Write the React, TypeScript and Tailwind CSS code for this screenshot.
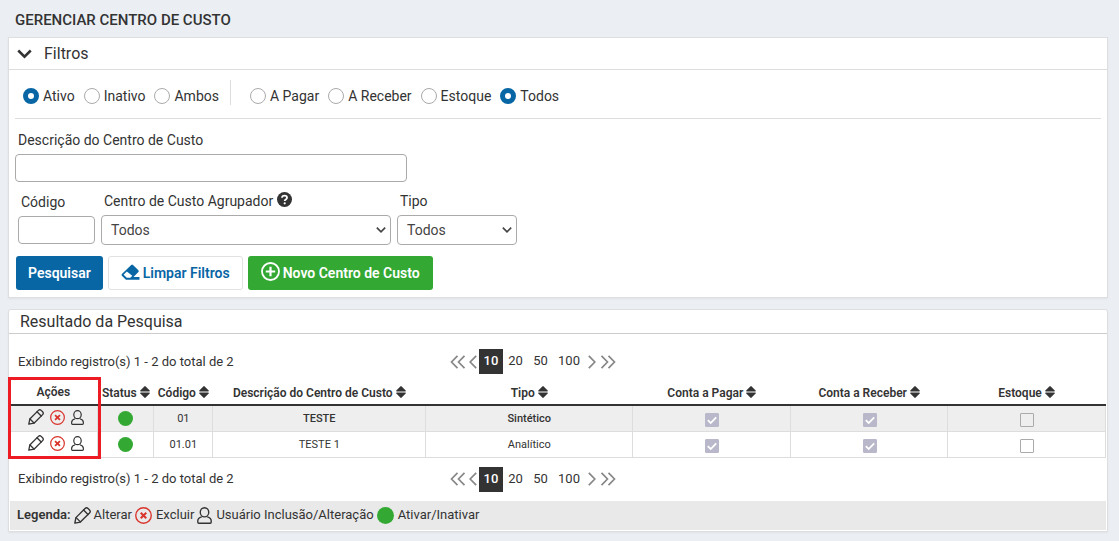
import React from 'react';

const PencilIcon = ({ className }: { className: string }) => (
  <svg viewBox="0 0 16 16" className={className} fill="none" stroke="#333" strokeWidth="1.300" strokeLinejoin="round" strokeLinecap="round" aria-hidden="true">
    <path d="M.8 15.200l1-5.200L10.400 1.400a2 2 0 0 1 2.800 0l1.400 1.400a2 2 0 0 1 0 2.800L6 14.200z" />
    <path d="M9 2.800L13.200 7M2 10l4 4" />
  </svg>
);

const ExcludeIcon = ({ className }: { className: string }) => (
  <svg viewBox="0 0 16 16" className={className} fill="none" stroke="#d9352c" aria-hidden="true">
    <circle cx="8" cy="8" r="7.300" strokeWidth="1.300" />
    <path d="M5.400 5.400l5.200 5.200M10.600 5.400l-5.200 5.200" strokeWidth="1.900" />
  </svg>
);

const UserIcon = ({ className }: { className: string }) => (
  <svg viewBox="0 0 14 16" className={className} fill="none" stroke="#333" strokeWidth="1.300" strokeLinejoin="round" aria-hidden="true">
    <ellipse cx="7" cy="5" rx="4" ry="4.300" />
    <path d="M4.400 9.300C2 10 .7 11.200.7 13v1.400q0 .9.9.9h10.800q.9 0 .9-.9V13c0-1.800-1.300-3-3.700-3.700" />
  </svg>
);

const SortIcon = () => (
  <svg viewBox="0 0 10 12" className="mb-0.5 h-3 w-2.5 shrink-0" fill="#333" aria-hidden="true">
    <path d="M4.600.3a.6.6 0 0 1 .8 0l4.300 4.100c.4.4.1 1-.5 1H.8c-.6 0-.9-.6-.5-1zM4.600 11.700a.6.6 0 0 0 .8 0l4.300-4.100c.4-.4.1-1-.5-1H.8c-.6 0-.9.6-.5 1z" />
  </svg>
);

const Dot = ({ className }: { className: string }) => (
  <svg viewBox="0 0 16 16" className={className} aria-hidden="true">
    <circle cx="8" cy="8" r="8" fill="#33a933" />
  </svg>
);

const ChevronDown = ({ className }: { className: string }) => (
  <svg viewBox="0 0 12 8" className={className} fill="none" stroke="currentColor" strokeWidth="2" aria-hidden="true">
    <path d="M1 1.200l5 5 5-5" />
  </svg>
);

const Arrow = ({ double, flip }: { double?: boolean; flip?: boolean }) => (
  <svg
    viewBox={double ? '0 0 16 14' : '0 0 8 14'}
    className={`${double ? 'w-4' : 'w-2'} h-3.5 ${flip ? 'rotate-180' : ''}`}
    fill="none"
    stroke="#888"
    strokeWidth="1.700"
    aria-hidden="true"
  >
    <path d={double ? 'M7.500.8L1.500 7l6 6.200M14.500.8L8.500 7l6 6.200' : 'M7.200.8L1.200 7l6 6.200'} />
  </svg>
);

const Radio = ({ name, label, checked }: { name: string; label: string; checked?: boolean }) => (
  <label className="flex items-center gap-1">
    <input
      type="radio"
      name={name}
      defaultChecked={checked}
      className="size-4 appearance-none rounded-full border border-[#aaa] bg-white checked:border-[5px] checked:border-[#0866a5]"
    />
    {label}
  </label>
);

const fieldClass = 'rounded border border-[#aaa] bg-white text-sm text-[#444]';

const Select = ({ id }: { id: string }) => (
  <div className="grid items-center">
    <select id={id} className={`${fieldClass} col-start-1 row-start-1 h-[30px] w-full appearance-none pr-6 pl-[9px]`}>
      <option>Todos</option>
    </select>
    <ChevronDown className="pointer-events-none col-start-1 row-start-1 mr-[5px] h-2 w-2.5 justify-self-end text-[#444]" />
  </div>
);

const Pager = () => (
  <div className="grid h-[25px] grid-cols-[432px_1fr] items-center text-[13px]">
    <p className="pt-px">Exibindo registro(s) 1 - 2 do total de 2</p>
    <nav aria-label="Paginação" className="flex items-center">
      <button type="button" aria-label="Primeira página"><Arrow double /></button>
      <button type="button" aria-label="Página anterior" className="ml-[3px]"><Arrow /></button>
      <button type="button" className="ml-0.5 h-[25px] w-6 bg-[#333] font-medium text-white">10</button>
      <button type="button" className="w-[25px]">20</button>
      <button type="button" className="w-[25px]">50</button>
      <button type="button" className="w-8">100</button>
      <button type="button" aria-label="Próxima página" className="ml-[3px]"><Arrow flip /></button>
      <button type="button" aria-label="Última página" className="ml-1"><Arrow double flip /></button>
    </nav>
  </div>
);

const Check = ({ label, checked }: { label: string; checked: boolean }) => (
  <div className="grid justify-center pt-1 pl-px">
    <input
      type="checkbox"
      aria-label={label}
      disabled
      defaultChecked={checked}
      className="peer col-start-1 row-start-1 size-3.5 appearance-none rounded-[1px] border border-[#aaa] checked:border-[#b9b8ca] checked:bg-[#b9b8ca]"
    />
    <svg viewBox="0 0 14 14" className="pointer-events-none invisible col-start-1 row-start-1 size-3.5 peer-checked:visible" fill="none" stroke="#fff" strokeWidth="1.800" aria-hidden="true">
      <path d="M2.800 7.200l2.900 2.800 5.500-5.700" />
    </svg>
  </div>
);

const columns = [
  { title: 'Ações', width: 'w-[8.1%]', sortable: false },
  { title: 'Status', width: 'w-[5.1%]', sortable: true },
  { title: 'Código', width: 'w-[5.4%]', sortable: true },
  { title: 'Descrição do Centro de Custo', width: 'w-[19.4%]', sortable: true },
  { title: 'Tipo', width: 'w-[18.9%]', sortable: true },
  { title: 'Conta a Pagar', width: 'w-[14.4%]', sortable: true },
  { title: 'Conta a Receber', width: 'w-[14.3%]', sortable: true },
  { title: 'Estoque', width: 'w-[14.4%]', sortable: true },
];

const rows = [
  { code: '01', description: 'TESTE', type: 'Sintético', group: true },
  { code: '01.01', description: 'TESTE 1', type: 'Analítico', group: false },
];

export default function App() {
  return (
    <main className="min-h-screen bg-[#ebeff4] pr-[11px] pb-2 pl-2 font-['Roboto',sans-serif] text-sm text-[#333]">
      <h1 className="px-[7px] pt-2.5 pb-[7px] text-[15px] leading-5 font-medium">GERENCIAR CENTRO DE CUSTO</h1>

      <section className="border border-[#dcdee0] bg-white pb-[7px] shadow-xs">
        <h2 className="flex h-8 items-center border-b border-[#ddd] px-2 text-base">
          <button type="button" className="flex items-center gap-3">
            <ChevronDown className="h-2.5 w-[15px]" />
            Filtros
          </button>
        </h2>

        <form className="px-1.5" onSubmit={(e) => e.preventDefault()}>
          <div className="flex h-[49px] items-center gap-2 border-b border-[#ddd] pl-2">
            <div className="flex gap-[9px] pt-1" role="radiogroup" aria-label="Situação">
              <Radio name="situacao" label="Ativo" checked />
              <Radio name="situacao" label="Inativo" />
              <Radio name="situacao" label="Ambos" />
            </div>
            <div className="mr-1 ml-[3px] mb-1 h-[25px] border-l border-[#ddd]" />
            <div className="flex gap-[9px] pt-1 pl-[7px]" role="radiogroup" aria-label="Conta">
              <Radio name="conta" label="A Pagar" />
              <Radio name="conta" label="A Receber" />
              <Radio name="conta" label="Estoque" />
              <Radio name="conta" label="Todos" checked />
            </div>
          </div>

          <div className="flex max-w-[392px] flex-col gap-1 pt-[11px]">
            <label htmlFor="descricao" className="pl-[3px] leading-5">Descrição do Centro de Custo</label>
            <input id="descricao" type="text" className={`${fieldClass} h-7 px-2`} />
          </div>

          <div className="flex items-start gap-1.5 pt-[9px] pl-[3px]">
            <div className="flex w-[77px] flex-col gap-1 pt-px">
              <label htmlFor="codigo" className="pl-[3px] leading-5">Código</label>
              <input id="codigo" type="text" className={`${fieldClass} h-7 w-full px-2`} />
            </div>
            <div className="flex w-[290px] flex-col gap-1">
              <label htmlFor="agrupador" className="flex items-center gap-1 pl-[3px] leading-5">
                Centro de Custo Agrupador
                <svg viewBox="0 0 16 16" className="mb-1 size-[15px]" aria-hidden="true">
                  <circle cx="8" cy="8" r="8" fill="#333" />
                  <path d="M5.300 6.200C5.400 4.700 6.500 3.800 8 3.800s2.700.9 2.700 2.200c0 1.900-2.500 1.900-2.500 3.500" fill="none" stroke="#fff" strokeWidth="1.900" />
                  <circle cx="8.200" cy="12" r="1.200" fill="#fff" />
                </svg>
              </label>
              <Select id="agrupador" />
            </div>
            <div className="flex w-[120px] flex-col gap-1">
              <label htmlFor="tipo" className="pl-[3px] leading-5">Tipo</label>
              <Select id="tipo" />
            </div>
          </div>

          <div className="flex gap-[5px] pt-[11px] pl-px">
            <button type="submit" className="h-[34px] rounded-[3px] bg-[#0866a5] px-3 font-semibold text-white">Pesquisar</button>
            <button type="button" className="flex h-[34px] items-center gap-[3px] rounded-[3px] border border-[#e2e2e2] bg-white px-3 font-semibold text-[#0866a5]">
              <svg viewBox="0 0 19 17" className="mb-0.5 h-[17px] w-[19px]" aria-hidden="true">
                <path d="M10.200.9q.9-.8 1.800 0l5.400 5.400q.8.9 0 1.800L12.500 13H18.500v2.800H5.800q-.8 0-1.400-.6L.9 11.700q-.8-.9 0-1.800z" fill="#0866a5" />
                <path d="M5.800 7.500L2.600 10.800l3.200 3h3.500l2-2z" fill="#fff" />
              </svg>
              Limpar Filtros
            </button>
            <button type="button" className="flex h-[34px] items-center gap-[3px] rounded-[3px] bg-[#33a933] px-[13px] font-semibold text-white">
              <svg viewBox="0 0 19 19" className="mb-[3px] size-[19px]" fill="none" stroke="#fff" aria-hidden="true">
                <circle cx="9.500" cy="9.500" r="8.500" strokeWidth="1.800" />
                <path d="M9.500 4.800v9.400M4.800 9.500h9.400" strokeWidth="2.200" />
              </svg>
              Novo Centro de Custo
            </button>
          </div>
        </form>
      </section>

      <section className="mt-[11px] rounded-t-[3px] border border-[#dcdee0] bg-white px-px pb-px shadow-xs">
        <h2 className="-mx-px h-6 border-b border-[#ccc] px-[11px] text-base leading-[23px]">Resultado da Pesquisa</h2>
        <div className="px-2 pt-[15px] pb-[5px]"><Pager /></div>

        <div className="relative -ml-px">
          <table className="w-full table-fixed border-collapse text-center text-[12px]">
            <thead>
              <tr className="h-[26px] border-b-2 border-[#333]">
                {columns.map((c) => (
                  <th key={c.title} scope="col" className={`${c.width} p-0 pt-[3px] font-semibold`}>
                    {c.sortable ? (
                      <button type="button" className="inline-flex items-center gap-[3px] align-middle whitespace-nowrap">
                        {c.title}
                        <SortIcon />
                      </button>
                    ) : c.title}
                  </th>
                ))}
              </tr>
            </thead>
            <tbody>
              {rows.map((r) => (
                <tr key={r.code} className={`h-[26px] border-b border-[#ddd] text-[11px] ${r.group ? 'bg-[#eee]' : 'bg-white'}`}>
                  <td className="border-r border-[#ddd] p-0">
                    <div className="flex items-center justify-center gap-1.5 pb-0.5 pl-1.5">
                      <button type="button" aria-label="Alterar"><PencilIcon className="size-4" /></button>
                      <button type="button" aria-label="Excluir"><ExcludeIcon className="size-[15px]" /></button>
                      <button type="button" aria-label="Usuário Inclusão/Alteração"><UserIcon className="h-[15px] w-[13px]" /></button>
                    </div>
                  </td>
                  <td className="border-r border-[#ddd] p-0">
                    <button type="button" aria-label="Ativar/Inativar" className="block w-full"><Dot className="mx-auto size-[15px]" /></button>
                  </td>
                  <td className="border-r border-[#ddd] p-0 pt-0.5">{r.code}</td>
                  <td className={`border-r border-[#ddd] p-0 pt-0.5 ${r.group ? 'font-medium' : ''}`}>{r.description}</td>
                  <td className={`border-r border-[#ddd] p-0 pt-0.5 ${r.group ? 'font-medium' : ''}`}>{r.type}</td>
                  <td className="border-r border-[#ddd] p-0"><Check label="Conta a Pagar" checked /></td>
                  <td className="border-r border-[#ddd] p-0"><Check label="Conta a Receber" checked /></td>
                  <td className="border-r border-[#ddd] p-0"><Check label="Estoque" checked={false} /></td>
                </tr>
              ))}
            </tbody>
          </table>
          <div className="pointer-events-none absolute -top-0.5 -bottom-px -left-px w-[8.500%] border-3 border-[#ed1c24]" />
        </div>

        <div className="px-2 py-[9px]"><Pager /></div>

        <div className="flex h-[29px] items-center gap-[3px] bg-[#e9e9e9] px-[7px] text-[13px]">
          <strong className="font-semibold">Legenda:</strong>
          <PencilIcon className="size-[17px]" />
          <span>Alterar</span>
          <ExcludeIcon className="size-[17px]" />
          <span className="pl-px">Excluir</span>
          <UserIcon className="h-[17px] w-[15px]" />
          <span className="pl-px">Usuário Inclusão/Alteração</span>
          <Dot className="size-[17px]" />
          <span className="pl-px">Ativar/Inativar</span>
        </div>
      </section>
    </main>
  );
}
